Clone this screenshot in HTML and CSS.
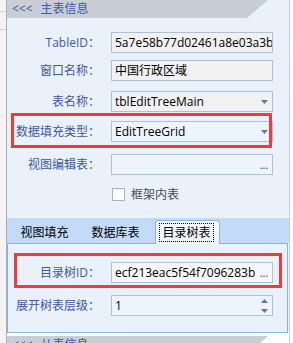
FILE: index.html
```html
<!DOCTYPE html>
<html lang="zh-CN">
<head>
<meta charset="utf-8">
<link rel="stylesheet" href="styles.css">
</head>
<body>
<div class="frame">
  <div class="gridstrip"></div>
  <div class="panel">
    <div class="head">
      <div class="head-shape"><span class="chev">&lt;&lt;&lt;</span><span>主表信息</span></div>
    </div>
    <div class="body">
      <div class="row r1">
        <span class="lbl">TableID：</span>
        <div class="field ro"><span class="txt">5a7e58b77d02461a8e03a3b1</span></div>
      </div>
      <div class="row r2">
        <span class="lbl">窗口名称：</span>
        <div class="field ro"><span class="txt">中国行政区域</span></div>
      </div>
      <div class="row r3">
        <span class="lbl">表名称：</span>
        <div class="field ro"><span class="txt">tblEditTreeMain</span><span class="btn"><svg width="7" height="4" viewBox="0 0 7 4"><path d="M0 0h7L3.5 4z" fill="#5b79b1"/></svg></span></div>
      </div>
      <div class="row hl hl1">
        <span class="lbl">数据填充类型：</span>
        <div class="field"><span class="txt">EditTreeGrid</span><span class="btn"><svg width="7" height="4" viewBox="0 0 7 4"><path d="M0 0h7L3.5 4z" fill="#5b79b1"/></svg></span></div>
      </div>
      <div class="row r5">
        <span class="lbl">视图编辑表：</span>
        <div class="field"><span class="txt"></span><span class="btn dots">...</span></div>
      </div>
      <div class="row chk">
        <span class="cbox"></span><span class="ctext">框架内表</span>
      </div>
      <div class="tabstrip">
        <span class="tab">视图填充</span>
        <span class="tab">数据库表</span>
        <span class="tab active"><span class="focus">目录树表</span></span>
      </div>
      <div class="tabpage">
        <div class="row hl hl2">
          <span class="lbl">目录树ID：</span>
          <div class="field light"><span class="txt">ecf213eac5f54f7096283b1a</span><span class="btn dots">...</span></div>
        </div>
        <div class="row r7">
          <span class="lbl">展开树表层级：</span>
          <div class="field"><span class="txt">1</span><span class="btn"><svg width="7" height="14" viewBox="0 0 7 14"><path d="M3.5 0L7 4H0z M0 10h7L3.5 14z" fill="#5b79b1"/></svg></span></div>
        </div>
      </div>
    </div>
    <div class="head next">
      <div class="head-shape"><span class="chev">&lt;&lt;&lt;</span><span>从表信息</span></div>
    </div>
  </div>
  <div class="rightstrip"></div>
</div>
</body>
</html>
```
FILE: styles.css
```css
body {
  margin: 0;
  width: 293px;
  height: 343px;
  overflow: hidden;
  background: #fff;
  font-family: "Open Sans", "Noto Sans CJK SC", sans-serif;
  font-size: 12px;
  line-height: 16px;
  color: #000;
}
.frame {
  display: flex;
  height: 343px;
}
.gridstrip {
  width: 6px;
  flex: none;
  background:
    linear-gradient(to bottom, transparent 11px, #d2d2d2 11px, #d2d2d2 12px, transparent 12px),
    linear-gradient(to bottom, transparent 29px, #d2d2d2 29px, #d2d2d2 30px, transparent 30px),
    #f4f4f4;
}
.panel {
  width: 282px;
  flex: none;
  border-left: 1px solid #a7afba;
  border-right: 1px solid #c5cedb;
  display: flex;
  flex-direction: column;
  background: #fff;
}
.rightstrip {
  flex: 1;
  background: #fff;
}
.head {
  height: 18px;
  flex: none;
  background: #e9f1fb;
}
.head.next {
  background: #fff;
  margin-top: 3px;
}
.head-shape {
  height: 18px;
  background: #c9ced6;
  clip-path: polygon(0 0, 261px 0, 240px 100%, 0 100%);
  display: flex;
  align-items: center;
  padding-left: 5px;
  color: #3b5aa6;
}
.chev {
  margin-right: 8px;
}
.body {
  background: #e9f1fb;
  display: flex;
  flex-direction: column;
  flex: none;
}
.row {
  display: flex;
  align-items: center;
  flex: none;
}
.lbl {
  width: 93px;
  flex: none;
  text-align: right;
  white-space: nowrap;
  color: #3f57a2;
}
.field {
  margin-left: 11px;
  width: 162px;
  height: 21px;
  box-sizing: border-box;
  border: 1px solid #adc0da;
  background: #eef4fc;
  display: flex;
  align-items: center;
  flex: none;
  overflow: hidden;
}
.field.ro {
  background: #f1f1f1;
}
.field.light {
  background: #f4f8fd;
}
.txt {
  flex: 1;
  min-width: 0;
  padding-left: 3px;
  overflow: hidden;
  white-space: nowrap;
}
.btn {
  width: 16px;
  height: 100%;
  flex: none;
  display: flex;
  align-items: center;
  justify-content: center;
}
.dots {
  color: #333;
  font-size: 11px;
  align-items: flex-end;
  padding-bottom: 3px;
  box-sizing: border-box;
  line-height: 12px;
}
.hl {
  outline: 3px solid #ee3b3b;
  box-sizing: border-box;
  align-items: flex-start;
}
.r1 { margin-top: 14px; }
.r2 { margin-top: 7px; }
.r3 { margin-top: 10px; }
.hl1 {
  margin: 4px 0 0 7px;
  width: 255px;
  height: 29px;
  padding-top: 5px;
}
.hl1 .lbl { width: 86px; line-height: 21px; }
.r5 { margin-top: 9px; }
.chk {
  margin-top: 13px;
  padding-left: 105px;
  height: 13px;
}
.cbox {
  width: 13px;
  height: 13px;
  box-sizing: border-box;
  border: 1px solid #a3b4cc;
  background: #fbfcfe;
  flex: none;
}
.ctext {
  margin-left: 6px;
  color: #4a4a4a;
}
.tabstrip {
  margin-top: 17px;
  height: 25px;
  background: #c3dbf9;
  display: flex;
  align-items: flex-end;
  padding-left: 2px;
  flex: none;
}
.tab {
  width: 71px;
  height: 23px;
  display: flex;
  align-items: center;
  justify-content: center;
  padding-top: 2px;
  box-sizing: border-box;
  flex: none;
}
.tab.active {
  width: 65px;
  margin-left: 4px;
  height: 24px;
  margin-bottom: -1px;
  padding: 2px 0 0 0;
  align-items: flex-start;
  justify-content: flex-start;
  border: 1px solid #8fb1dc;
  border-bottom: 0;
  border-radius: 3px 3px 0 0;
  background: linear-gradient(#fdfeff, #e9f1fb);
  position: relative;
  z-index: 1;
}
.focus {
  margin-left: 3px;
  width: 55px;
  height: 19px;
  box-sizing: border-box;
  border: 1px dotted #000;
  display: flex;
  align-items: center;
  justify-content: center;
}
.tabpage {
  width: 281px;
  height: 90px;
  box-sizing: border-box;
  border: 1px solid #8fb1dc;
  background: #e9f1fb;
  display: flex;
  flex-direction: column;
}
.tabpage .lbl { width: 92px; }
.hl2 {
  margin: 12px 0 0 9px;
  width: 262px;
  height: 29px;
  padding-top: 6px;
}
.hl2 .lbl { width: 83px; line-height: 21px; }
.r7 { margin-top: 10px; }
```
